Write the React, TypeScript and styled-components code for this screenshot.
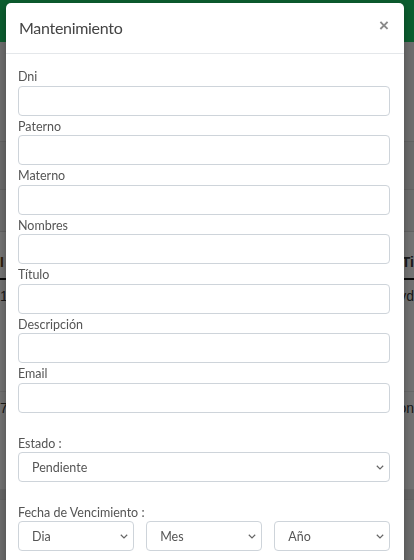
import React from "react";
import styled, { createGlobalStyle } from "styled-components";

const Global = createGlobalStyle`
  html, body {
    margin: 0;
    padding: 0;
    width: 414px;
    height: 560px;
    overflow: hidden;
    background: #dcdcdc;
    font-family: "Lato", "Liberation Sans", sans-serif;
  }
  * { box-sizing: border-box; }
`;

const Page = styled.div`
  width: 414px;
  height: 560px;
  display: flex;
  flex-direction: column;
  background: #d8d8d8;
`;

const Navbar = styled.div`
  height: 42px;
  flex: none;
  background: #17ba5e;
`;

const Band = styled.div<{ $h: number; $bg: string }>`
  height: ${(p) => p.$h}px;
  flex: none;
  background: ${(p) => p.$bg};
  border-bottom: 1px solid #c4c4c4;
`;

const TableHead = styled.div`
  height: 48px;
  flex: none;
  display: flex;
  align-items: flex-end;
  justify-content: space-between;
  padding: 0 0 8px 0;
  background: #e6e6e6;
  border-bottom: 2px solid #111;
  font-family: "Liberation Sans", sans-serif;
  font-weight: 700;
  font-size: 14px;
  color: #333;
`;

const TableRow = styled.div<{ $h: number }>`
  height: ${(p) => p.$h}px;
  flex: none;
  display: flex;
  justify-content: space-between;
  padding-top: 8px;
  background: #e2e2e2;
  border-bottom: 1px solid #cfcfcf;
  font-family: "Liberation Sans", sans-serif;
  font-size: 14px;
  color: #333;
`;

const Cell = styled.span<{ $tone?: string }>`
  color: ${(p) => p.$tone || "#333"};
`;

const Backdrop = styled.div`
  position: fixed;
  inset: 0;
  background: rgba(0, 0, 0, 0.5);
`;

const ModalLayer = styled.div`
  position: fixed;
  inset: 0;
  padding: 3px 10px 0 6px;
  display: flex;
  align-items: flex-start;
`;

const Dialog = styled.div`
  width: 398px;
  background: #fff;
  border-radius: 5px;
  box-shadow: 0 3px 8px rgba(0, 0, 0, 0.3);
  min-height: 600px;
`;

const Header = styled.div`
  height: 51px;
  display: flex;
  align-items: center;
  justify-content: space-between;
  padding: 0 15px 1px 13px;
  border-bottom: 1px solid #e4e7ea;
`;

const Title = styled.h4`
  margin: 0;
  font-size: 16px;
  letter-spacing: -0.3px;
  font-weight: 400;
  color: #444;
`;

const Close = styled.button`
  border: none;
  background: none;
  padding: 0;
  margin: 0 0 5px 0;
  font-family: "Liberation Sans", sans-serif;
  font-size: 17px;
  font-weight: 700;
  line-height: 1;
  color: #8a8a8a;
  cursor: pointer;
`;

const Body = styled.div`
  padding: 12px 14px 0 12px;
  display: flex;
  flex-direction: column;
`;

const Group = styled.div<{ $gap?: number }>`
  display: flex;
  flex-direction: column;
  margin-top: ${(p) => p.$gap || 0}px;
`;

const Label = styled.label`
  font-size: 12.5px;
  line-height: 19.5px;
  padding-top: 1px;
  margin-bottom: -1px;
  color: #555;
`;

const Input = styled.input`
  height: 30px;
  width: 100%;
  border: 1px solid #ced4da;
  border-radius: 4px;
  background: #fff;
  font-family: inherit;
  font-size: 13px;
  padding: 0 12px;
  outline: none;
`;

const SelectWrap = styled.div`
  position: relative;
  height: 30px;
`;

const Select = styled.select`
  appearance: none;
  -webkit-appearance: none;
  width: 100%;
  height: 30px;
  border: 1px solid #ced4da;
  border-radius: 4px;
  background: #fff;
  font-family: inherit;
  font-size: 12.5px;
  color: #555;
  padding: 0 20px 0 13px;
  outline: none;
`;

const Chevron = styled.svg`
  position: absolute;
  right: 6px;
  top: 13px;
  width: 8px;
  height: 5px;
  pointer-events: none;
`;

const DateRow = styled.div`
  display: grid;
  grid-template-columns: repeat(3, 1fr);
  gap: 12.5px;
`;

const fields = ["Dni", "Paterno", "Materno", "Nombres", "Título", "Descripción", "Email"];

function Dropdown({ options }: { options: string[] }) {
  return (
    <SelectWrap>
      <Select defaultValue={options[0]}>
        {options.map((o) => (
          <option key={o}>{o}</option>
        ))}
      </Select>
      <Chevron viewBox="0 0 8 5">
        <polyline points="0.8,0.8 4,3.9 7.2,0.8" fill="none" stroke="#666" strokeWidth="1.2" />
      </Chevron>
    </SelectWrap>
  );
}

export default function App() {
  return (
    <>
      <Global />
      <Page>
        <Navbar />
        <Band $h={100} $bg="#dadada" />
        <Band $h={48} $bg="#d4d4d4" />
        <Band $h={42} $bg="#d9d9d9" />
        <TableHead>
          <Cell $tone="#5a3a10">I</Cell>
          <Cell>Ti</Cell>
        </TableHead>
        <TableRow $h={112}>
          <Cell>12</Cell>
          <Cell>vd</Cell>
        </TableRow>
        <TableRow $h={98}>
          <Cell>70</Cell>
          <Cell>ion</Cell>
        </TableRow>
        <Band $h={10} $bg="#c8c8c8" />
      </Page>
      <Backdrop />
      <ModalLayer>
        <Dialog role="dialog">
          <Header>
            <Title>Mantenimiento</Title>
            <Close aria-label="Cerrar">×</Close>
          </Header>
          <Body>
            {fields.map((f) => (
              <Group key={f}>
                <Label>{f}</Label>
                <Input type="text" />
              </Group>
            ))}
            <Group $gap={20}>
              <Label>Estado :</Label>
              <Dropdown options={["Pendiente", "Atendido"]} />
            </Group>
            <Group $gap={19.5}>
              <Label>Fecha de Vencimiento :</Label>
              <DateRow>
                <Dropdown options={["Dia"]} />
                <Dropdown options={["Mes"]} />
                <Dropdown options={["Año"]} />
              </DateRow>
            </Group>
          </Body>
        </Dialog>
      </ModalLayer>
    </>
  );
}
